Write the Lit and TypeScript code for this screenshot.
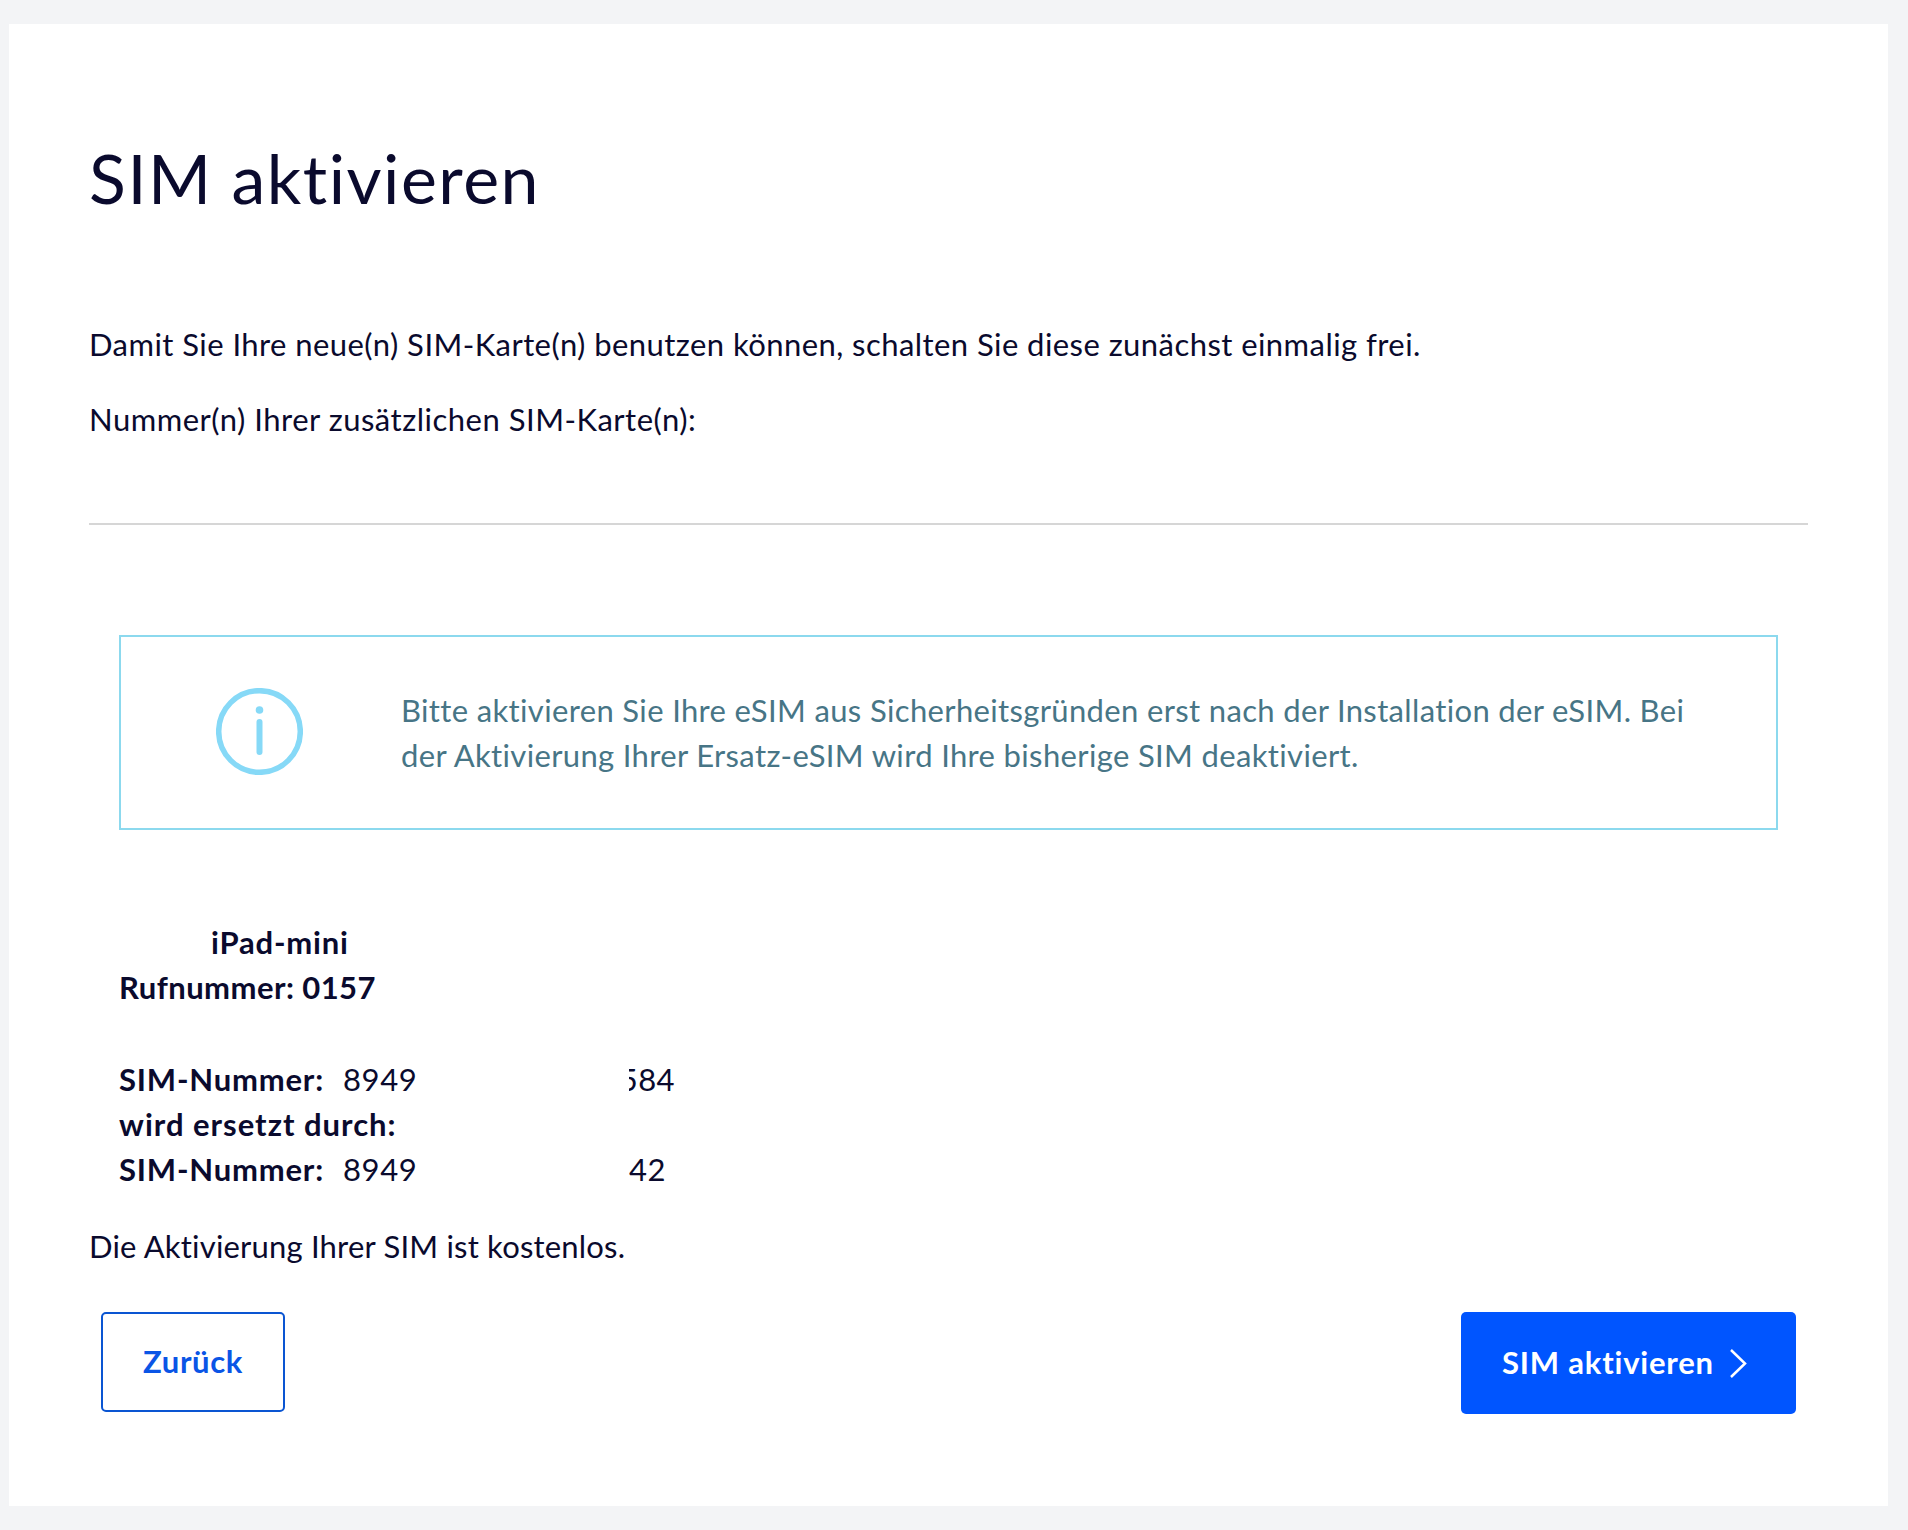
import { LitElement, html, css } from 'lit';
import { customElement } from 'lit/decorators.js';

@customElement('app-root')
export class AppRoot extends LitElement {
  static styles = css`
    :host {
      display: block;
      height: 1530px;
      box-sizing: border-box;
      padding: 24px 20px 24px 9px;
      background: #f3f4f6;
      color: #0a0a2d;
      font-family: Lato, 'Noto Sans', sans-serif;
      font-size: 31px;
      letter-spacing: 0.44px;
      line-height: 45px;
    }
    .card {
      background: #fff;
      height: 100%;
      box-sizing: border-box;
      padding: 112px 80px 0 80px;
    }
    h1 {
      margin: 0;
      font-size: 68px;
      font-weight: 400;
      letter-spacing: 1.5px;
      line-height: 84px;
    }
    p {
      margin: 0;
    }
    .intro {
      margin-top: 102px;
    }
    .numbers {
      margin-top: 30px;
      letter-spacing: 0.5px;
    }
    hr {
      margin: 81px 0 0;
      border: 0;
      border-top: 2px solid #d6d6d6;
    }
    .notice {
      margin: 110px 30px 0 30px;
      height: 195px;
      box-sizing: border-box;
      border: 2px solid #8cd9ee;
      display: flex;
      align-items: center;
      color: #477586;
      letter-spacing: 0.35px;
    }
    .notice svg {
      flex: none;
      margin: 0 98px 2px 95px;
    }
    .notice p {
      padding-right: 70px;
    }
    .details {
      margin: 90px 30px 0 30px;
      font-weight: 700;
      letter-spacing: 0.8px;
    }
    .device {
      padding-left: 92px;
    }
    .phone {
      letter-spacing: 0.44px;
    }
    .replaced {
      letter-spacing: 1px;
    }
    .gap {
      height: 47px;
    }
    .sim {
      display: flex;
    }
    .sim .label {
      width: 224px;
    }
    .sim .value {
      font-weight: 400;
      width: 286px;
      letter-spacing: 0.6px;
    }
    .sim .tail {
      font-weight: 400;
      width: 46px;
      overflow: hidden;
      letter-spacing: 0.44px;
    }
    .sim .tail.clipped {
      display: flex;
      justify-content: flex-end;
    }
    .free {
      margin-top: 32px;
      letter-spacing: 0.19px;
    }
    .actions {
      margin: 43px 12px 0 12px;
      display: flex;
      justify-content: space-between;
      align-items: flex-start;
    }
    button {
      font: inherit;
      font-weight: 700;
      letter-spacing: 0.6px;
      box-sizing: border-box;
      border-radius: 5px;
      padding: 0 0 2px;
      cursor: pointer;
    }
    .back {
      width: 184px;
      height: 100px;
      background: #fff;
      border: 2px solid #0a55d2;
      color: #0a55e6;
    }
    .next {
      width: 335px;
      height: 102px;
      background: #0055ff;
      border: 0;
      color: #fff;
      display: flex;
      align-items: center;
      padding-left: 41px;
      letter-spacing: 0.8px;
    }
    .next svg {
      margin: 2px 0 0 15px;
    }
  `;

  render() {
    return html`
      <div class="card">
        <h1>SIM aktivieren</h1>
        <p class="intro">Damit Sie Ihre neue(n) SIM-Karte(n) benutzen können, schalten Sie diese zunächst einmalig frei.</p>
        <p class="numbers">Nummer(n) Ihrer zusätzlichen SIM-Karte(n):</p>
        <hr />
        <div class="notice">
          <svg width="87" height="87" viewBox="0 0 87 87" fill="none" stroke="#86d9f7">
            <circle cx="43.5" cy="43.5" r="40.8" stroke-width="5.5" />
            <circle cx="43.5" cy="22" r="3.8" fill="#86d9f7" stroke="none" />
            <path d="M43.5 34v30" stroke-width="6" stroke-linecap="round" />
          </svg>
          <p>Bitte aktivieren Sie Ihre eSIM aus Sicherheitsgründen erst nach der Installation der eSIM. Bei der Aktivierung Ihrer Ersatz-eSIM wird Ihre bisherige SIM deaktiviert.</p>
        </div>
        <div class="details">
          <div class="device">iPad-mini</div>
          <div class="phone">Rufnummer: 0157</div>
          <div class="gap"></div>
          <div class="sim"><span class="label">SIM-Nummer:</span><span class="value">8949</span><span class="tail clipped"><span>584</span></span></div>
          <div class="replaced">wird ersetzt durch:</div>
          <div class="sim"><span class="label">SIM-Nummer:</span><span class="value">8949</span><span class="tail">42</span></div>
        </div>
        <p class="free">Die Aktivierung Ihrer SIM ist kostenlos.</p>
        <div class="actions">
          <button class="back">Zurück</button>
          <button class="next">
            SIM aktivieren
            <svg width="18" height="31" viewBox="0 0 18 31" fill="none" stroke="#fff" stroke-width="2.5">
              <path d="M2 2l14 13.5L2 29" />
            </svg>
          </button>
        </div>
      </div>
    `;
  }
}
